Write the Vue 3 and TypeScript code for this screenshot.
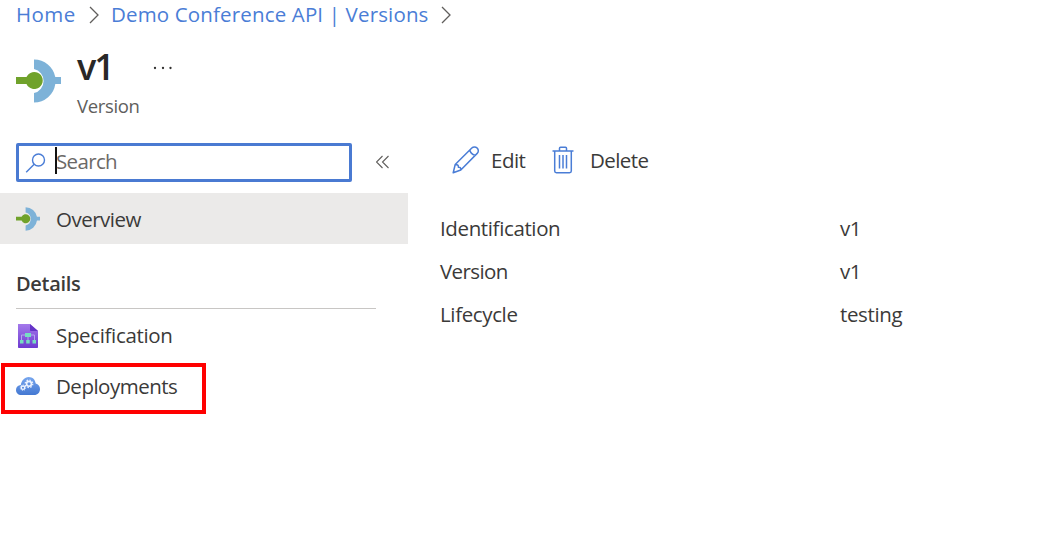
<script setup lang="ts">
interface Property {
  label: string
  value: string
  key: string
}

const properties: Property[] = [
  { label: 'Identification', value: 'v1', key: 'identification' },
  { label: 'Version', value: 'v1', key: 'version' },
  { label: 'Lifecycle', value: 'testing', key: 'lifecycle' },
]
</script>

<template>
  <div class="page">
    <nav class="breadcrumb">
      <a class="home">Home</a>
      <svg class="chevron" width="10" height="18" viewBox="0 0 10 18"><path d="M1 1l8 8-8 8" /></svg>
      <a class="api">Demo Conference API | Versions</a>
      <svg class="chevron last" width="10" height="18" viewBox="0 0 10 18"><path d="M1 1l8 8-8 8" /></svg>
    </nav>

    <header class="header">
      <svg class="logo" width="45" height="44" viewBox="0 0 45 44">
        <path fill="#7db2d8" d="M18 .5A21.500 21.500 0 0 1 39.300 18H45v7h-5.700A21.500 21.500 0 0 1 18 43.500V34A12.300 12.300 0 0 0 18 10z" />
        <path fill="#70a22b" d="M0 18h10.500a8.500 8.500 0 1 1 0 7H0z" />
      </svg>
      <div class="titles">
        <div class="title-row">
          <h1>v1</h1>
          <svg class="more" width="20" height="4" viewBox="0 0 20 4"><circle cx="2" cy="2" r="1.150" /><circle cx="10" cy="2" r="1.150" /><circle cx="17.500" cy="2" r="1.150" /></svg>
        </div>
        <div class="subtitle">Version</div>
      </div>
    </header>

    <div class="body">
      <aside class="sidebar">
        <div class="search-row">
          <div class="search">
            <svg width="22" height="22" viewBox="0 0 22 22" fill="none" stroke="#4a7dd6" stroke-width="1.400"><circle cx="13.500" cy="8" r="6" /><path d="M9.200 12.300L1.200 20.300" /></svg>
            <span class="caret"></span>
            <span class="placeholder">Search</span>
          </div>
          <svg class="collapse" width="14" height="14" viewBox="0 0 14 14"><path d="M6.500 1l-6 6 6 6M12.500 1l-6 6 6 6" /></svg>
        </div>

        <div class="item selected">
          <svg class="item-icon" width="24" height="24" viewBox="0 0 45 44">
            <path fill="#7db2d8" d="M18 0A21.500 21.500 0 0 1 39.300 18H45v7h-5.700A21.500 21.500 0 0 1 18 44V34A12.300 12.300 0 0 0 18 10z" />
            <path fill="#70a22b" d="M0 18h10.500a8.500 8.500 0 1 1 0 7H0z" />
          </svg>
          <span class="overview">Overview</span>
        </div>

        <h2>Details</h2>

        <div class="item spec">
          <svg class="item-icon" width="24" height="24" viewBox="0 0 24 24">
            <defs><linearGradient id="doc" x2="0" y2="1"><stop stop-color="#a479eb" /><stop offset="1" stop-color="#6d3bd0" /></linearGradient></defs>
            <path fill="url(#doc)" d="M2 0h12l8 7v16.200a.8.800 0 0 1-.8.800H2.800a.8.800 0 0 1-.8-.8z" />
            <path fill="#6534c7" d="M14 0l8 7h-7.200a.8.800 0 0 1-.8-.8z" />
            <path fill="none" stroke="#b6a5ef" stroke-width="1" d="M9 11H5.500v6M15 11h3.500v6M12 12v5" />
            <path fill="#76ddc1" d="M9 9h6v4H9zM4 16h3.500v3.500H4zM10.200 16h3.500v3.500h-3.500zM16.500 16H20v3.500h-3.500z" />
          </svg>
          <span class="specification">Specification</span>
        </div>
        <div class="item deploy">
          <svg class="item-icon" width="24" height="24" viewBox="0 0 24 24">
            <defs><linearGradient id="cloud" x2="0" y2="1"><stop stop-color="#77a6ee" /><stop offset="1" stop-color="#4478d2" /></linearGradient></defs>
            <path fill="url(#cloud)" d="M5.500 21C2 21 0 18.900 0 16c0-2.800 1.900-4.600 4.800-5C5.500 6.800 8.500 3 12.700 3c4 0 6.500 2.800 7 6.500 2.600.5 4.300 2.700 4.300 5.500 0 3.400-2.200 6-5.800 6z" />
            <g fill="none" stroke="#eef4ff">
              <circle cx="13" cy="9.800" r="2.400" stroke-width="1.600" /><circle cx="13" cy="9.800" r="3.800" stroke-width="1.200" stroke-dasharray="1.500 1.480" />
              <circle cx="7" cy="13.700" r="1.700" stroke-width="1.300" /><circle cx="7" cy="13.700" r="2.700" stroke-width=".9" stroke-dasharray="1.060 1.060" />
            </g>
          </svg>
          <span class="deployments">Deployments</span>
          <div class="highlight"></div>
        </div>
      </aside>

      <main class="content">
        <div class="toolbar">
          <svg class="pencil" width="28" height="28" viewBox="0 0 28 28" fill="none" stroke="#4a7dd6" stroke-width="1.500" stroke-linejoin="round">
            <path d="M1.200 26.800l2-8.300L19.800 2a3.700 3.700 0 0 1 5.300 0l.1.100a3.700 3.700 0 0 1 0 5.300L8.800 24zM3.200 18.500c2.500-.1 3.300.7 3.200 2.700 1.900-.2 2.600.6 2.400 2.800M17.800 4c.9 3.200 2.400 4.900 5.600 5.300" />
          </svg>
          <span class="edit">Edit</span>
          <svg class="trash" width="22" height="28" viewBox="0 0 22 28" fill="none" stroke="#4a7dd6" stroke-width="1.500">
            <path d="M.5 5h21M7.500 5V2.200a1 1 0 0 1 1-1h5a1 1 0 0 1 1 1V5M2.700 5v20a1.700 1.700 0 0 0 1.700 1.700h13.200a1.700 1.700 0 0 0 1.700-1.700V5M7.500 9v13.500M11 9v13.500M14.500 9v13.500" />
          </svg>
          <span class="delete">Delete</span>
        </div>
        <dl class="properties">
          <template v-for="p in properties" :key="p.key">
            <dt :class="p.key">{{ p.label }}</dt>
            <dd>{{ p.value }}</dd>
          </template>
        </dl>
      </main>
    </div>
  </div>
</template>

<style>
body { margin: 0; background: #fff; }
</style>

<style scoped>
.page {
  box-sizing: border-box;
  width: 1052px;
  height: 538px;
  overflow: hidden;
  background: #fff;
  color: #3b3a39;
  font-family: "Open Sans", "Noto Sans", sans-serif;
  font-size: 20.500px;
  line-height: 28px;
  white-space: nowrap;
}
svg { display: block; flex: none; }
.breadcrumb { display: flex; align-items: center; height: 28px; padding-left: 16px; color: #4a7dd6; }
.home { width: 73px; letter-spacing: .4px; }
.api { width: 318px; margin-left: 12px; letter-spacing: .150px; }
.breadcrumb a { margin-top: -1px; }
.chevron { margin-top: 2px; fill: none; stroke: #605e5c; stroke-width: 1.300; }
.last { margin-left: 12px; }
.header { display: flex; height: 108px; padding-left: 16px; }
.logo { margin-top: 31px; }
.titles { margin-left: 16px; }
.title-row { display: flex; height: 64px; align-items: center; padding-top: 13px; box-sizing: border-box; }
h1 { width: 76px; margin: 0; font-size: 36px; line-height: 64px; font-weight: 600; color: #292827; letter-spacing: -2px; }
.more { fill: #323130; margin-top: 3px; }
.subtitle { font-size: 18.500px; color: #605e5c; letter-spacing: -.35px; }
.body { display: flex; }
.sidebar { width: 408px; flex: none; }
.search-row { display: flex; align-items: center; padding: 7px 0 11px 16px; }
.search { box-sizing: border-box; display: flex; align-items: center; width: 336px; height: 39px; padding-left: 6px; border: 3px solid #4a7ad2; border-radius: 2px; color: #6b6967; }
.caret { width: 2px; height: 27px; margin: -4px -1px 0 8px; background: #111; }
.search svg { margin-top: 1px; }
.placeholder { margin-top: -3px; letter-spacing: -.65px; }
.collapse { margin: -2px 0 0 24px; fill: none; stroke: #605e5c; stroke-width: 1.100; }
.item { display: flex; align-items: center; height: 51px; padding-left: 16px; position: relative; }
.item-icon { margin-right: 16px; }
.selected { background: #ebeae9; }
.overview { letter-spacing: -.5px; }
h2 { width: 360px; height: 65px; margin: 0 0 1px 16px; box-sizing: border-box; padding-top: 26px; border-bottom: 1px solid #c8c6c4; font-size: 20px; line-height: 28px; font-weight: 600; letter-spacing: -.3px; }
.spec .item-icon { margin-top: 1px; }
.deploy .item-icon { margin-top: -2px; }
.specification { margin-top: -2px; letter-spacing: -.35px; }
.deployments { margin-top: -2px; letter-spacing: -.5px; }
.highlight { position: absolute; left: 1px; top: 2px; width: 205px; height: 51px; box-sizing: border-box; border: 4px solid #f00; }
.content { padding-left: 32px; }
.toolbar { display: flex; align-items: center; height: 48px; padding-left: 12px; }
.edit { width: 61px; margin-left: 11px; letter-spacing: -.5px; }
.delete { margin-left: 16px; letter-spacing: -.6px; }
.properties { display: grid; grid-template-columns: 400px auto; grid-auto-rows: 43px; align-items: center; margin: 22px 0 0; letter-spacing: -.37px; }
dt, dd { margin: 0; }
.version { letter-spacing: -.6px; }
</style>
